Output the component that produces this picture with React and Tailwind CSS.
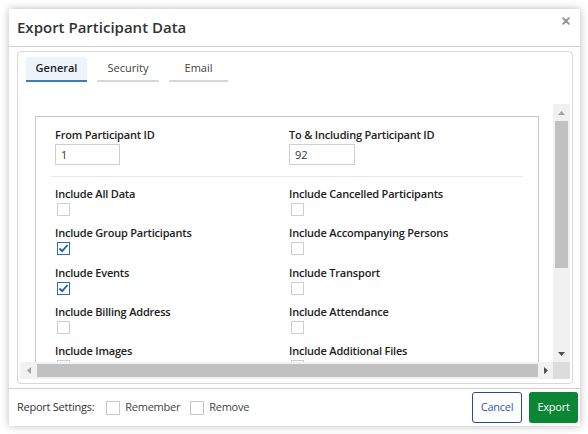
import React from 'react';

const leftItems = [
  { label: 'Include All Data', checked: false },
  { label: 'Include Group Participants', checked: true },
  { label: 'Include Events', checked: true },
  { label: 'Include Billing Address', checked: false },
  { label: 'Include Images', checked: false },
];

const rightItems = [
  { label: 'Include Cancelled Participants', checked: false },
  { label: 'Include Accompanying Persons', checked: false },
  { label: 'Include Transport', checked: false },
  { label: 'Include Attendance', checked: false },
  { label: 'Include Additional Files', checked: false },
];

const Check = ({ checked }) => (
  <div
    className={
      'w-[13px] h-[13px] border flex items-center justify-center bg-white ' +
      (checked ? 'border-[#2a6db5]' : 'border-[#cfcfcf]')
    }
  >
    {checked && (
      <svg width="11" height="11" viewBox="0 0 11 11">
        <path d="M1.5 5.5 L4.2 8.2 L9.5 2" fill="none" stroke="#1f5fa8" strokeWidth="1.8" />
      </svg>
    )}
  </div>
);

const Option = ({ label, checked }) => (
  <div className="pl-[4px] mb-[9.25px]">
    <div className="h-[16px] leading-[16px] text-[11px] font-semibold text-[#222] tracking-[-0.2px]">{label}</div>
    <div className="mt-[1px] pl-[2px]">
      <Check checked={checked} />
    </div>
  </div>
);

const App = () => {
  return (
    <div
      className="w-[588px] h-[434px] bg-white pt-[9px] pl-[9px]"
      style={{ fontFamily: '"Open Sans", "Liberation Sans", sans-serif' }}
    >
      <div className="w-[571px] h-[417px] bg-white shadow-[0_0_8px_rgba(0,0,0,0.28)] flex flex-col">
        {/* header */}
        <div className="h-[38px] border-b border-[#cfcfcf] flex items-center justify-between pl-[8px] pr-[10px]">
          <div className="text-[15px] font-semibold text-[#333]">Export Participant Data</div>
          <svg width="8" height="8" viewBox="0 0 8 8" className="mb-[14px]">
            <path d="M1.2 1.2 L6.8 6.8 M6.8 1.2 L1.2 6.8" stroke="#999" strokeWidth="2" strokeLinecap="round" />
          </svg>
        </div>

        {/* body */}
        <div className="h-[341px] pt-[4px]">
          <div className="ml-[8px] w-[556px] h-[333px] border border-[#d8d8d8] rounded-[4px] pt-[5px]">
            <div className="flex gap-[10px] pl-[8px] h-[25px]">
              <div className="w-[61px] h-[25px] bg-[#edf4fc] rounded-t-[3px] border-b-2 border-[#3a7cc0] flex items-center justify-center text-[11px] font-semibold text-[#222]">
                General
              </div>
              <div className="w-[62px] h-[25px] border-b-2 border-[#d6d6d6] flex items-center justify-center text-[11px] text-[#444]">
                Security
              </div>
              <div className="w-[59px] h-[25px] border-b-2 border-[#d6d6d6] flex items-center justify-center text-[11px] text-[#444]">
                Email
              </div>
            </div>

            {/* scroll region */}
            <div className="mt-[22px] ml-[2px] w-[550px] h-[275px] flex flex-col">
              <div className="flex h-[258px]">
                <div className="w-[533px] h-[258px] overflow-hidden pl-[15px] pt-[12px]">
                  <div className="w-[504px] h-[320px] border border-[#c8c8c8] px-[15px] pt-[10px]">
                    <div className="grid grid-cols-[234px_234px]">
                      <div className="pl-[4px]">
                        <div className="h-[16px] leading-[16px] text-[11px] font-semibold text-[#222] tracking-[-0.2px]">From Participant ID</div>
                        <div className="mt-[1px] w-[65px] h-[21px] border border-[#cfcfcf] px-[5px] text-[11px] leading-[19px] text-[#333]">1</div>
                      </div>
                      <div className="pl-[4px]">
                        <div className="h-[16px] leading-[16px] text-[11px] font-semibold text-[#222] tracking-[-0.2px]">To &amp; Including Participant ID</div>
                        <div className="mt-[1px] w-[66px] h-[21px] border border-[#cfcfcf] px-[5px] text-[11px] leading-[19px] text-[#333]">92</div>
                      </div>
                    </div>
                    <div className="mt-[11px] w-[472px] h-px bg-[#e8e8e8]" />
                    <div className="mt-[9px] grid grid-cols-[234px_234px]">
                      <div>
                        {leftItems.map((it) => (
                          <Option key={it.label} {...it} />
                        ))}
                      </div>
                      <div>
                        {rightItems.map((it) => (
                          <Option key={it.label} {...it} />
                        ))}
                      </div>
                    </div>
                  </div>
                </div>
                {/* vertical scrollbar */}
                <div className="w-[17px] h-[258px] bg-[#f1f1f1] flex flex-col items-center">
                  <div className="h-[17px] flex items-center justify-center">
                    <svg width="7" height="4" viewBox="0 0 7 4">
                      <path d="M0 4 L3.5 0 L7 4 Z" fill="#a3a3a3" />
                    </svg>
                  </div>
                  <div className="w-[13px] h-[147px] bg-[#c1c1c1]" />
                  <div className="flex-1" />
                  <div className="h-[17px] flex items-center justify-center">
                    <svg width="7" height="4" viewBox="0 0 7 4">
                      <path d="M0 0 L7 0 L3.5 4 Z" fill="#505050" />
                    </svg>
                  </div>
                </div>
              </div>
              <div className="flex h-[17px]">
                {/* horizontal scrollbar */}
                <div className="w-[533px] h-[17px] bg-[#f1f1f1] flex items-center">
                  <div className="w-[17px] flex items-center justify-center">
                    <svg width="4" height="7" viewBox="0 0 4 7">
                      <path d="M4 0 L0 3.5 L4 7 Z" fill="#a3a3a3" />
                    </svg>
                  </div>
                  <div className="w-[501px] h-[13px] bg-[#c1c1c1]" />
                  <div className="w-[15px] flex items-center justify-center">
                    <svg width="4" height="7" viewBox="0 0 4 7">
                      <path d="M0 0 L4 3.5 L0 7 Z" fill="#505050" />
                    </svg>
                  </div>
                </div>
                <div className="w-[17px] h-[17px] bg-[#dcdcdc]" />
              </div>
            </div>
          </div>
        </div>

        {/* footer */}
        <div className="h-[38px] border-t border-[#cfcfcf] flex items-center pl-[8px] pr-[2px] text-[11px] tracking-[-0.25px]">
          <span className="text-[#333]">Report Settings:</span>
          <div className="ml-[12px] flex items-center">
            <div className="w-[14px] h-[14px] border border-[#c8c8c8]" />
            <span className="ml-[5px] text-[#444]">Remember</span>
          </div>
          <div className="ml-[10px] flex items-center">
            <div className="w-[14px] h-[14px] border border-[#c8c8c8]" />
            <span className="ml-[5px] text-[#444]">Remove</span>
          </div>
          <div className="flex-1" />
          <button className="w-[50px] h-[31px] border border-[#1f4f8f] rounded-[3px] text-[#245fa5] bg-white">
            Cancel
          </button>
          <button className="ml-[7px] w-[49px] h-[31px] rounded-[3px] bg-[#0b8634] text-white">
            Export
          </button>
        </div>
      </div>
    </div>
  );
};

export default App;
